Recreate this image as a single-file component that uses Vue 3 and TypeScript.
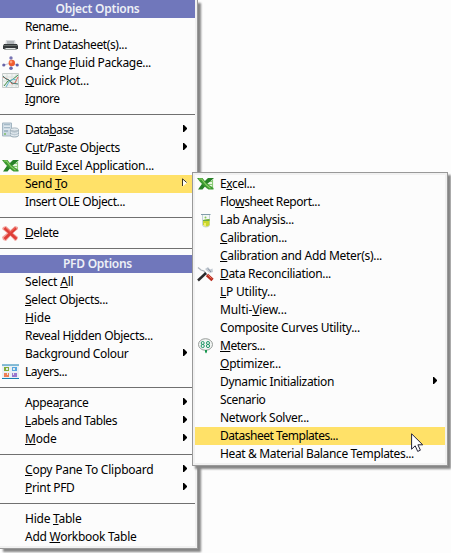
<script setup lang="ts">
import { nextTick, onMounted, ref } from 'vue'

type Icon = 'printer' | 'fluid' | 'plot' | 'database' | 'excel' | 'delete' | 'layers' | 'lab' | 'tools' | 'meter'
interface Entry {
  kind: 'item' | 'heading' | 'separator'
  label: string
  width: number
  icon?: Icon
  arrow?: boolean
  active?: boolean
}

// An underscore precedes the access key of a label; width is the label's set width.
const item = (label: string, width: number, extra: Partial<Entry> = {}): Entry => ({ kind: 'item', label, width, ...extra })
const heading = (label: string, width: number): Entry => ({ kind: 'heading', label, width })
const separator: Entry = { kind: 'separator', label: '', width: 0 }

const mainMenu: Entry[] = [
  heading('Object Options', 84),
  item('Rename...', 52),
  item('Print Datasheet(s)...', 102, { icon: 'printer' }),
  item('Change _Fluid Package...', 126, { icon: 'fluid' }),
  item('_Quick Plot...', 64, { icon: 'plot' }),
  item('_Ignore', 34.5),
  separator,
  item('Data_base', 48.5, { icon: 'database', arrow: true }),
  item('C_ut/Paste Objects', 95, { arrow: true }),
  item('Build E_xcel Application...', 129, { icon: 'excel' }),
  item('Send _To', 42.5, { arrow: true, active: true }),
  item('Insert OLE Object...', 100),
  separator,
  item('_Delete', 33.5, { icon: 'delete' }),
  separator,
  heading('PFD Options', 69),
  item('Select _All', 48.5),
  item('_Select Objects...', 83),
  item('_Hide', 25.5),
  item('Reveal H_idden Objects...', 128),
  item('Background Colour', 103.5, { arrow: true }),
  item('Layers...', 42, { icon: 'layers' }),
  separator,
  item('Appea_rance', 63.5, { arrow: true }),
  item('_Labels and Tables', 92, { arrow: true }),
  item('_Mode', 31.5, { arrow: true }),
  separator,
  item('_Copy Pane To Clipboard', 128.5, { arrow: true }),
  item('_Print PFD', 49.5, { arrow: true }),
  separator,
  item('Hide _Table', 56.5),
  item('Add _Workbook Table', 111.5),
]

const sendToMenu: Entry[] = [
  item('E_xcel...', 35, { icon: 'excel' }),
  item('Flo_wsheet Report...', 100),
  item('Lab Analysis...', 74, { icon: 'lab' }),
  item('_Calibration...', 67),
  item('_Calibration and Add Meter(s)...', 162),
  item('_Data Reconciliation...', 111, { icon: 'tools' }),
  item('_LP Utility...', 56),
  item('Multi-_View...', 67),
  item('Composite Curves Utility...', 140),
  item('_Meters...', 45, { icon: 'meter' }),
  item('_Optimizer...', 61),
  item('Dynamic Initialization', 114, { arrow: true }),
  item('Scenario', 45.5),
  item('Network Solver...', 89),
  item('Datasheet Templates...', 118, { active: true }),
  item('Heat & Material Balance Templates...', 194),
]

const menus = [
  { name: 'main', entries: mainMenu },
  { name: 'submenu', entries: sendToMenu },
]

const parts = (label: string) => {
  const at = label.indexOf('_')
  return at < 0 ? [label, '', ''] : [label.slice(0, at), label[at + 1], label.slice(at + 2)]
}

const root = ref<HTMLElement>()
const tracking = ref<Record<string, string>>({})

onMounted(async () => {
  await nextTick()
  const next: Record<string, string> = {}
  root.value?.querySelectorAll<HTMLElement>('.label').forEach((el) => {
    const count = el.textContent?.length || 1
    const gap = (Number(el.dataset.width) - el.getBoundingClientRect().width) / count
    next[el.dataset.key as string] = `${gap.toFixed(3)}px`
  })
  tracking.value = next
})
</script>

<template>
  <main ref="root" class="stage">
    <div v-for="menu in menus" :key="menu.name" class="menu" :class="menu.name">
      <div
        v-for="(entry, i) in menu.entries"
        :key="i"
        :class="[entry.kind, { active: entry.active }]"
      >
        <span v-if="entry.kind === 'item'" class="icon">
          <svg v-if="entry.icon === 'printer'" width="18" height="16" viewBox="0 0 18 16">
            <path d="M4 3h9l1 5H3z" fill="#d7dadd" /><path d="M5 4h7v3H5z" fill="#b1b6ba" />
            <path d="M2 7h13l1 2v3H1V9z" fill="#34393b" /><path d="M2 8h13v1H2z" fill="#69716e" />
            <path d="M3 11h11l1 2H2z" fill="#9ba19f" /><path d="M4 11h9v1H4z" fill="#e4e7e6" />
          </svg>
          <svg v-else-if="entry.icon === 'fluid'" width="18" height="16" viewBox="0 0 18 16">
            <path d="M9 8V2M9 8v6M9 8l-7 2M9 8l7 2" stroke="#c5c3dc" />
            <circle cx="9" cy="2.9" r="1.7" fill="#7775b4" /><circle cx="1.8" cy="10" r="1.6" fill="#6866a8" />
            <circle cx="15.2" cy="10" r="1.6" fill="#5f5fa7" /><circle cx="9" cy="13.2" r="1.8" fill="#6865a9" />
            <circle cx="9.8" cy="8" r="3.2" fill="#ef5c2e" /><circle cx="9" cy="7" r="1.4" fill="#ffa27b" />
          </svg>
          <svg v-else-if="entry.icon === 'plot'" width="18" height="16" viewBox="0 0 18 16">
            <path d="M.5.5h16v14H.5z" fill="#f1f4f1" stroke="#c6ccca" />
            <path d="M1 4h15M1 8h15M1 12h15M5 1v13M10 1v13M14 1v13" stroke="#d8dfdd" />
            <path d="M1 4l6 3 3 4 3-1 3-6" fill="none" stroke="#d86959" />
            <path d="M2 13l4-5 4-1 6-5" fill="none" stroke="#41904b" />
            <path d="M1 3l3 3 3 1 3 3 6 1" fill="none" stroke="#477e78" />
            <path d="M4 14l3-5 4-3 3 1" fill="none" stroke="#65b5d0" />
          </svg>
          <svg v-else-if="entry.icon === 'database'" width="18" height="16" viewBox="0 0 18 16">
            <path d="M.5 1h9v13h-9z" fill="#cbd9e3" stroke="#a3b5c2" /><path d="M2 3h6M2 6h6M2 9h4" stroke="#7d98ac" />
            <path d="M2 4h6M2 7h6" stroke="#f5f9fb" /><circle cx="3" cy="12" r="1" fill="#7dbd64" />
            <path d="M8.5 7.5v6c0 2 8 2 8 0v-6" fill="#bdcad3" stroke="#9daeb9" />
            <ellipse cx="12.5" cy="7.5" rx="4" ry="1.6" fill="#e2e9ee" stroke="#a9b6bf" />
            <path d="M8.5 10c1 1.8 7 1.8 8 0M8.5 12.500c1 1.800 7 1.800 8 0" fill="none" stroke="#e9f0f4" />
          </svg>
          <svg v-else-if="entry.icon === 'excel'" width="18" height="16" viewBox="0 0 18 16">
            <path d="M10 2.5h6.500v10.500H9z" fill="#e6f5df" />
            <path d="M12 5.500h4M11 8.500h5M12 11h4M15.500 4v8" fill="none" stroke="#8aca76" />
            <path d="M11 2h6l-2.500 2.200Q9 8 5.500 13.500H1Q4.500 7.500 11 2z" fill="#278127" />
            <path d="M0 2h5.500q4.500 6.500 11 10v1.500H11.500Q5.500 9.500 0 2z" fill="#3d9a32" />
            <path d="M2 3h2.500q4 6 9 9.200" fill="none" stroke="#8bd064" stroke-width="1.200" />
          </svg>
          <svg v-else-if="entry.icon === 'delete'" width="18" height="16" viewBox="0 0 18 16">
            <path d="M1 2l3-1 4.500 4L13 1l3 1v2l-5 4 5 4-1 3-2 1-4.500-5L4 16l-3-1-1-3 5-4-5-4z" fill="#f2a39d" />
            <path d="M2.500 3l12 11M14 3L2.500 14" stroke="#df3e38" stroke-width="2.800" />
            <path d="M4 3l4.500 4L13 3" fill="none" stroke="#ef5e51" />
          </svg>
          <svg v-else-if="entry.icon === 'layers'" width="18" height="16" viewBox="0 0 18 16">
            <path d="M0 1h17v14H0z" fill="#e9f1f5" /><path d="M0 1h17M0 14.500h17" stroke="#1680b2" />
            <path d="M2 3h5v4H2z" fill="#83ad39" /><path d="M10 3h5v4h-5z" fill="#58a7e0" />
            <path d="M2 9h5v4H2z" fill="#ed8057" /><path d="M10 9h5v4h-5z" fill="#9a78cf" />
            <path d="M4 4h2v2H4zM11 4h2v2h-2zM5 9h1v2H5zM11 9h1v2h-1z" fill="#e2e9e8" />
          </svg>
          <svg v-else-if="entry.icon === 'lab'" width="18" height="16" viewBox="0 0 18 16">
            <path d="M5.500 2v11q0 2 3.500 2t3.500-2V2" fill="#f3f8f9" stroke="#c6d2d6" />
            <path d="M4 2.500h9.500" stroke="#819da9" /><path d="M6 8l6.500-1v6q-3 3-6.500 0z" fill="#c9d72c" />
            <path d="M6 8l6.500-1v2H6z" fill="#66a94a" /><path d="M7 11h2v3H7z" fill="#f3ec70" />
            <circle cx="8.500" cy="5.500" r="1" fill="#87c85b" />
          </svg>
          <svg v-else-if="entry.icon === 'tools'" width="18" height="16" viewBox="0 0 18 16">
            <path d="M1 1.500l3 2.500 3 1 3 4" fill="none" stroke="#aeb4ba" stroke-width="1.300" />
            <path d="M1 14.500l8-7.500" stroke="#29292b" stroke-width="2.400" />
            <path d="M8 3l3-2 2 2.500 2.500-1 .5 3.500-3 1-3-2z" fill="#c4cbd3" /><path d="M11 2.500l3 3.500" stroke="#8390a0" />
            <path d="M10 9l5.500 5" stroke="#b92e22" stroke-width="3.300" /><path d="M11 9l3.500 3.500" stroke="#ed7861" />
          </svg>
          <svg v-else-if="entry.icon === 'meter'" width="18" height="16" viewBox="0 0 18 16">
            <ellipse cx="8.500" cy="6.500" rx="7" ry="5.800" fill="#f2f5f3" stroke="#969b98" />
            <g fill="none" stroke="#229768"><circle cx="5.700" cy="5" r="1.500" /><circle cx="5.700" cy="8" r="1.600" /><circle cx="11" cy="5" r="1.500" /><circle cx="11" cy="8" r="1.600" /></g>
            <path d="M8 12h2v2l-1 1.500L8 14z" fill="#199950" />
          </svg>
        </span>
        <span
          v-if="entry.kind !== 'separator'"
          class="label"
          :data-key="menu.name + i"
          :data-width="entry.width"
          :style="{ letterSpacing: tracking[menu.name + i] }"
        >{{ parts(entry.label)[0] }}<span v-if="parts(entry.label)[1]" class="key">{{ parts(entry.label)[1] }}</span>{{ parts(entry.label)[2] }}</span>
        <svg v-if="entry.arrow" class="arrow" width="7" height="9" viewBox="0 0 7 9">
          <template v-if="entry.active">
            <path d="M.5.500v8l5-4z" fill="#fffef6" />
            <path d="M.5 8V.8l4.200 3.700" fill="none" stroke="#3a3526" />
          </template>
          <path v-else d="M1 1v7h1l3-3V4L2 1z" fill="#000" />
        </svg>
      </div>
    </div>
    <svg class="cursor" width="14" height="20" viewBox="0 0 14 20">
      <path d="M.6.8v15.400l3.600-3.400 2.500 5.600 2.700-1.200-2.500-5.400h4.800z" fill="#fff" stroke="#222238" stroke-linejoin="round" />
    </svg>
  </main>
</template>

<style>
body {
  overflow: hidden;
  background: #fdfdfd;
}
</style>

<style scoped>
.stage {
  position: relative;
  width: 451px;
  height: 553px;
  overflow: hidden;
  font-family: "Noto Sans", "Open Sans", sans-serif;
  font-size: 12px;
  color: #000;
}
.menu {
  box-sizing: border-box;
  background: #fcfcfc;
  border: 1px solid #999;
  box-shadow: inset 0 0 0 2px #f1f1f1, 3px 3px 2px #858585;
}
.main {
  width: 198px;
  height: 549px;
  border-top: 0;
  border-left: 0;
  padding-right: 2px;
  box-shadow: inset -2px -2px 0 #f1f1f1, 3px 3px 2px #858585;
}
.submenu {
  position: absolute;
  top: 172px;
  left: 192px;
  width: 256px;
  height: 294px;
  padding: 2px;
}
.item,
.heading {
  display: flex;
  height: 18px;
  line-height: 18px;
  white-space: nowrap;
}
.heading {
  justify-content: center;
  background: #7077bb;
  color: #edf0f6;
  font-weight: 600;
}
.active {
  background: #ffe168;
}
.icon {
  display: flex;
  flex: none;
  width: 23px;
  margin-left: 2px;
  padding-top: 1px;
}
.label {
  flex: none;
}
.key {
  text-decoration: underline;
  text-decoration-thickness: 1px;
  text-underline-offset: 1px;
  text-decoration-skip-ink: none;
}
.arrow {
  flex: none;
  margin: 3px 6px 0 auto;
}
.separator {
  height: 13px;
  display: flex;
  align-items: center;
}
.separator::before {
  content: "";
  flex: 1;
  height: 1px;
  background: #707070;
}
.cursor {
  position: absolute;
  left: 411px;
  top: 433px;
}
</style>
